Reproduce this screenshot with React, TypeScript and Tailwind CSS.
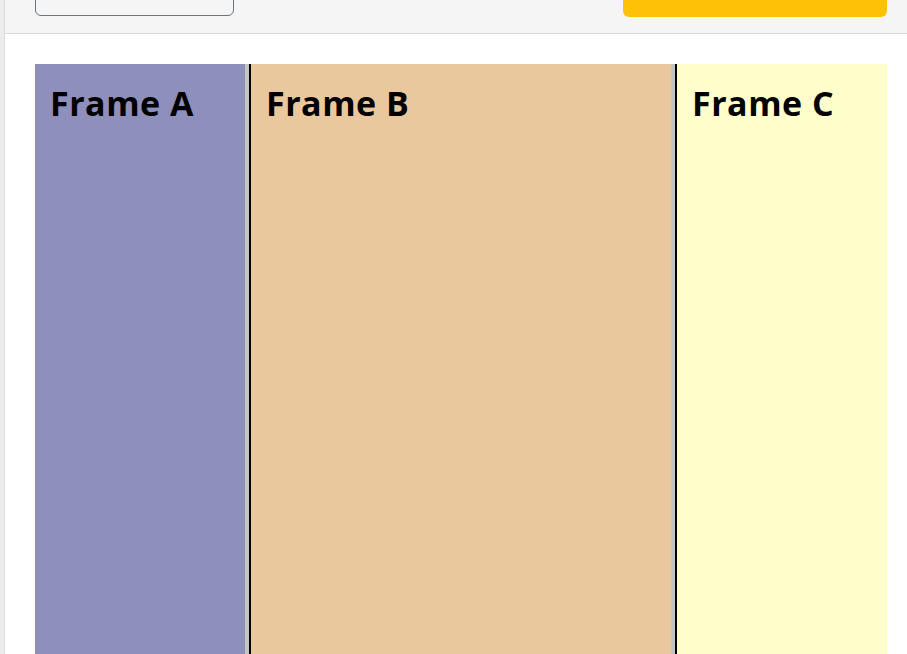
const frames = [
  { name: "Frame A", bg: "bg-[#8e8fbb]", width: "w-[210px]" },
  { name: "Frame B", bg: "bg-[#eac89e]", width: "w-[420px]" },
  { name: "Frame C", bg: "bg-[#ffffcc]", width: "w-[210px]" },
];

const Splitter = () => (
  <div className="flex shrink-0">
    <div className="w-[4px] bg-[#c4c4c4]" />
    <div className="w-[2px] bg-black" />
  </div>
);

export default function App() {
  return (
    <div className="flex h-[654px] overflow-hidden bg-white font-['Open_Sans',sans-serif]">
      <div className="w-[5px] shrink-0 border-r border-[#dcdcdc] bg-[#ececec]" />
      <div className="flex flex-1 flex-col">
        <header className="flex h-[34px] shrink-0 items-start justify-between border-b border-[#dcdcdc] bg-[#f5f5f5] pl-[30px] pr-[20px]">
          <button className="-mt-[10px] h-[26px] w-[199px] rounded-[6px] border border-[#6b7280] bg-transparent" />
          <button className="-mt-[10px] h-[27px] w-[264px] rounded-[6px] bg-[#ffc107]" />
        </header>
        <main className="flex pl-[30px] pt-[30px]">
          {frames.map((f, i) => (
            <div key={f.name} className="flex">
              {i > 0 && <Splitter />}
              <div className={`${f.width} ${f.bg} h-[600px] pl-[15px] pr-4 pt-[14px]`}>
                <h1 className="text-[34px] font-bold leading-[50px] tracking-[0.5px] text-black">{f.name}</h1>
              </div>
            </div>
          ))}
        </main>
      </div>
    </div>
  );
}
